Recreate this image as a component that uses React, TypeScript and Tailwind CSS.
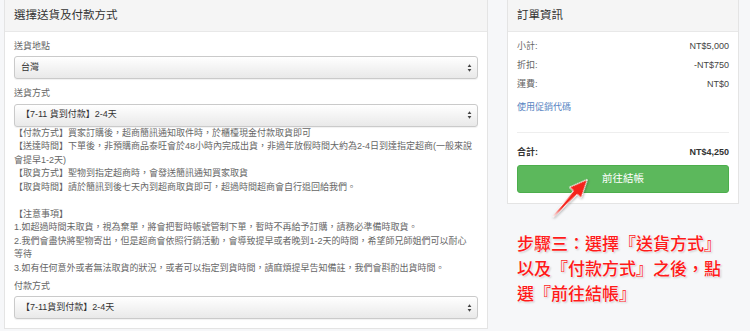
import React from "react";

function Select({ value }: { value: string }) {
  return (
    <div className="relative flex h-[23px] items-center rounded-[3px] border border-[#cacaca] bg-linear-to-b from-[#ffffff] to-[#e9e9e9] pl-[6px] text-[9px] text-[#333] shadow-[0_1px_1px_rgba(0,0,0,0.06)]">
      <span>{value}</span>
      <svg
        className="absolute right-[5px] top-1/2 -translate-y-1/2"
        width="5"
        height="9"
        viewBox="0 0 5 9"
      >
        <path d="M2.5 0.8 L4.4 3.6 H0.6Z M2.5 8.2 L4.4 5.4 H0.6Z" fill="#444" />
      </svg>
    </div>
  );
}

const lines: string[] = [
  "【付款方式】買家訂購後，超商簡訊通知取件時，於櫃檯現金付款取貨即可",
  "【送達時間】下單後，非預購商品泰旺會於48小時內完成出貨，非過年放假時間大約為2-4日到達指定超商(一般來說",
  "會提早1-2天)",
  "【取貨方式】聖物到指定超商時，會發送簡訊通知買家取貨",
  "【取貨時間】請於簡訊到後七天內到超商取貨即可，超過時間超商會自行退回給我們。",
  "\u00a0",
  "【注意事項】",
  "1.如超過時間未取貨，視為棄單，將會把暫時帳號管制下單，暫時不再給予訂購，請務必準備時取貨。",
  "2.我們會盡快將聖物寄出，但是超商會依照行銷活動，會導致提早或者晚到1-2天的時間，希望師兄師姐們可以耐心",
  "等待",
  "3.如有任何意外或者無法取貨的狀況，或者可以指定到貨時間，請麻煩提早告知備註，我們會斟酌出貨時間。",
];

export default function App() {
  return (
    <div className="relative flex h-[331px] w-[750px] gap-[19px] overflow-hidden bg-[#f6f7f9] pl-[4px] font-['Liberation_Sans','Noto_Sans_CJK_TC',sans-serif]">
      {/* Left panel */}
      <div className="-mt-px h-[330px] w-[484px] border border-[#e4e4e4] bg-white">
        <div className="flex h-[32px] items-center border-b border-[#e8e8e8] bg-[#f5f5f5] px-[9px] text-[11.5px] text-[#333]">
          選擇送貨及付款方式
        </div>
        <div className="px-[9px] pt-[8px]">
          <div className="mb-[2.5px] text-[9px] leading-[13.5px] text-[#666]">送貨地點</div>
          <Select value="台灣" />
          <div className="mb-[3px] mt-[8px] text-[9px] leading-[13.5px] text-[#666]">送貨方式</div>
          <Select value="【7-11 貨到付款】2-4天" />
          <div className="text-[9px] leading-[13.5px] text-[#666]">
            {lines.map((l, i) => (
              <div key={i} className="whitespace-nowrap">
                {l}
              </div>
            ))}
          </div>
          <div className="mb-[2.5px] mt-[5px] text-[9px] leading-[13.5px] text-[#666]">付款方式</div>
          <Select value="【7-11貨到付款】2-4天" />
        </div>
      </div>

      {/* Right column */}
      <div className="flex w-[232px] flex-col">
        <div className="-mt-px border border-[#e4e4e4] bg-white">
          <div className="flex h-[32px] items-center border-b border-[#e8e8e8] bg-[#f5f5f5] px-[9px] text-[11.5px] text-[#333]">
            訂單資訊
          </div>
          <div className="px-[9px] pb-[10px] pt-[8px] text-[9px] leading-[13.5px]">
            <div className="mb-[5.5px] flex justify-between">
              <span className="text-[#666]">小計:</span>
              <span className="text-[#444]">NT$5,000</span>
            </div>
            <div className="mb-[5.5px] flex justify-between">
              <span className="text-[#666]">折扣:</span>
              <span className="text-[#444]">-NT$750</span>
            </div>
            <div className="flex justify-between">
              <span className="text-[#666]">運費:</span>
              <span className="text-[#444]">NT$0</span>
            </div>
            <div className="mt-[9.5px] text-[#5683c2]">使用促銷代碼</div>
            <div className="mt-[17px] border-t border-[#eeeeee]" />
            <div className="mt-[13px] flex justify-between font-bold text-[#333]">
              <span>合計:</span>
              <span>NT$4,250</span>
            </div>
            <div className="mt-[6px] flex h-[28px] items-center justify-center rounded-[3px] border border-[#4cae4c] bg-[#5cb85c] text-[10.5px] text-white">
              前往結帳
            </div>
          </div>
        </div>
        <div className="mt-[28px] pl-[10px] text-[17px] font-medium leading-[25px] text-[#ff1a1a] [text-shadow:0_0_2px_#fff,0_0_2px_#fff,1px_1px_2px_rgba(0,0,0,0.25)]">
          <div className="whitespace-nowrap">步驟三：選擇『送貨方式』</div>
          <div className="whitespace-nowrap">以及『付款方式』之後，點</div>
          <div className="whitespace-nowrap">選『前往結帳』</div>
        </div>
      </div>

      {/* Red arrow overlay */}
      <svg
        className="pointer-events-none absolute left-0 top-0"
        width="750"
        height="331"
        viewBox="0 0 750 331"
      >
        <g transform="translate(553 217) rotate(-47.5)">
          <polygon
            points="0,-0.6 33,-2.6 33,-8 51,0 33,8 33,2.6 0,0.6"
            fill="#f5231b"
            stroke="#ffffff"
            strokeWidth="1"
            strokeLinejoin="round"
            style={{ filter: "drop-shadow(0.5px 1px 1px rgba(0,0,0,0.3))" }}
          />
        </g>
      </svg>
    </div>
  );
}
